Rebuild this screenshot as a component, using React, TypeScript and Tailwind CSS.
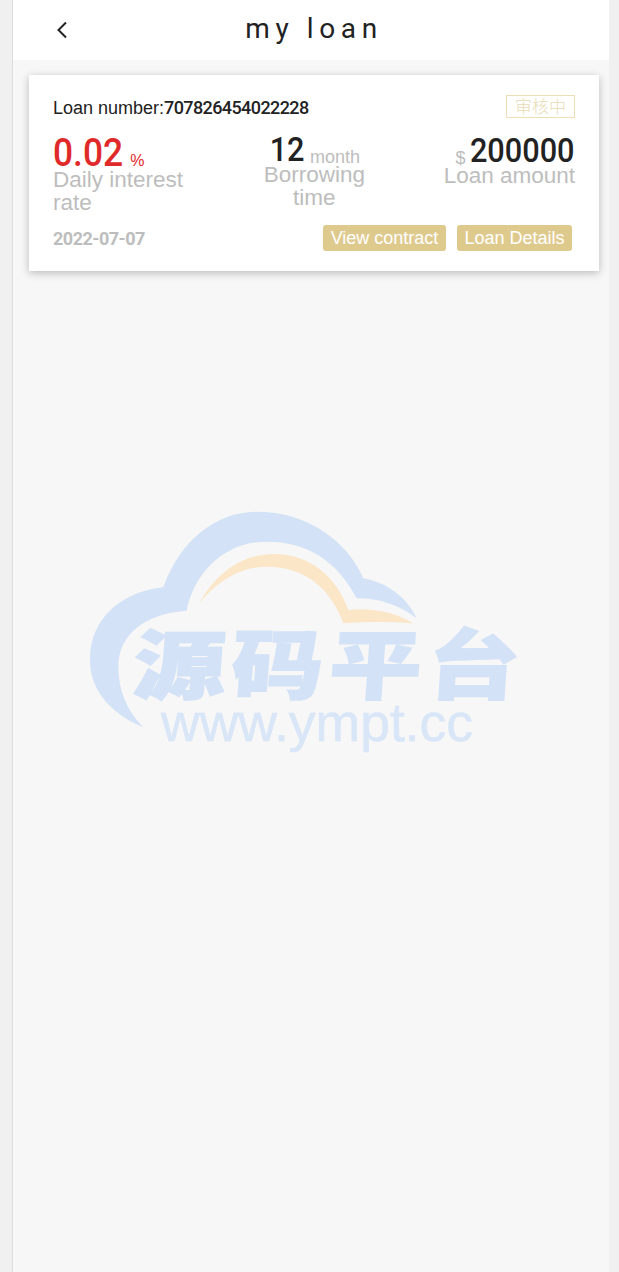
export default function App() {
  const sans = "font-['Liberation_Sans',Arial,sans-serif]";
  const din = "font-['Roboto',sans-serif]";
  return (
    <div className={`h-[1272px] w-[619px] overflow-hidden bg-[#f0f0f0] ${sans}`}>
      <div className="relative ml-3 h-full w-[597px] border-l border-[#dcdcdc] bg-[#f7f7f7]">
        <header className="relative flex h-[60px] items-center justify-center bg-white">
          <svg className="absolute left-[43px] top-[21px]" width="12" height="18" viewBox="0 0 12 18" fill="none" stroke="#222" strokeWidth="2">
            <path d="M10 1.5 2.5 9l7.5 7.5" />
          </svg>
          <h1 className={`text-[28px] font-normal leading-none tracking-[5.6px] text-[#222] ${din} relative top-[-1px] left-[3px]`}>my loan</h1>
        </header>

        <section className="relative z-10 ml-4 mr-[10px] mt-[15px] h-[196px] bg-white px-6 pt-[21px] shadow-[0_2px_8px_rgba(0,0,0,0.25)]">
          <div className="flex h-[24px] items-center justify-between">
            <p className="text-lg leading-6 text-[#222]">
              Loan number:<span className={`${din} font-medium tracking-[-0.6px]`}>707826454022228</span>
            </p>
            <span className="relative top-[-2px] flex h-[23px] w-[69px] items-center justify-center border border-[#ecdfb8] text-[17px] font-light text-[#e8dcb5] font-['Noto_Sans_CJK_SC',sans-serif]">审核中</span>
          </div>

          <div className="mt-4 flex h-[84px] items-start justify-between">
            <div className="w-[140px]">
              <div className="flex h-[36px] items-end leading-none">
                <span className={`${din} inline-block origin-left scale-x-[0.93] text-[38px] font-medium leading-[38px] text-[#e02a2a]`}>0.02</span>
                <span className="mb-[1px] ml-[2px] text-base leading-5 text-[#e02a2a]">%</span>
              </div>
              <p className="mt-[-4px] text-[22.5px] leading-[23px] text-[#bdbdbd]">Daily interest rate</p>
            </div>
            <div className="relative left-[-5px] top-[-1px] w-[120px] text-center">
              <div className="relative top-[1px] flex h-[32px] items-end justify-center leading-none">
                <span className={`${din} inline-block origin-right scale-x-[0.93] text-[33px] font-medium leading-[36px] text-[#222]`}>12</span>
                <span className="mb-[1px] ml-[6px] text-lg leading-5 text-[#bdbdbd]">month</span>
              </div>
              <p className="relative left-[1px] mt-[-4px] text-[22.5px] leading-[23px] text-[#bdbdbd]">Borrowing time</p>
            </div>
            <div className="text-right">
              <div className="relative top-[1px] flex h-[32px] items-end justify-end leading-none">
                <span className="mb-[1px] mr-[-3px] text-lg leading-5 text-[#bdbdbd]">$</span>
                <span className={`${din} inline-block origin-right scale-x-[0.93] text-[33px] font-medium leading-[36px] text-[#222]`}>200000</span>
              </div>
              <p className="mt-[-4px] text-[22.5px] leading-[23px] text-[#bdbdbd]">Loan amount</p>
            </div>
          </div>

          <div className="mt-1 flex items-center justify-between">
            <span className={`${din} relative top-[1px] text-lg font-bold tracking-[-0.5px] text-[#bdbdbd]`}>2022-07-07</span>
            <div className="mr-[3px] flex gap-[11px]">
              <button className="flex h-[26px] w-[123px] items-center justify-center rounded-[3px] bg-[#dfca8e] text-lg text-white">View contract</button>
              <button className="flex h-[26px] w-[115px] items-center justify-center rounded-[3px] bg-[#dfca8e] text-lg text-white">Loan Details</button>
            </div>
          </div>
        </section>

        {/* watermark */}
        <div className="absolute left-[67px] top-[500px] h-[260px] w-[450px]">
          <svg className="absolute inset-0" width="450" height="260" viewBox="0 0 1350 780">
            <path fill="#d3e2f6" d="M190 682C90 640 30 570 30 480C30 350 130 275 250 262C300 120 410 35 530 35C680 35 800 120 850 235C930 250 985 300 1010 355C950 310 890 295 830 295C770 180 680 125 560 125C440 125 345 210 320 332C200 340 115 400 115 500C115 570 140 630 190 682Z" />
            <path fill="#fbe6c8" d="M358 310C410 215 490 162 580 162C690 162 770 230 805 330C880 322 950 340 1000 370C930 365 860 365 790 370C750 260 670 200 560 200C480 200 410 245 358 310Z" />
          </svg>
          <div className="absolute left-[54px] top-[110px] flex w-[386px] justify-between font-['Noto_Sans_CJK_SC',sans-serif] text-[92px] font-black leading-[100px] text-[#d3e2f6] [-webkit-text-stroke:2px_#d3e2f6] [transform:skewX(-4deg)_scaleY(0.82)]">
            <span>源</span><span>码</span><span>平</span><span>台</span>
          </div>
          <div className="absolute left-[81px] top-[195px] text-[53.5px] leading-[56px] text-[#d9e6f7] [-webkit-text-stroke:0.6px_#d9e6f7]">www.ympt.cc</div>
        </div>
      </div>
    </div>
  );
}
